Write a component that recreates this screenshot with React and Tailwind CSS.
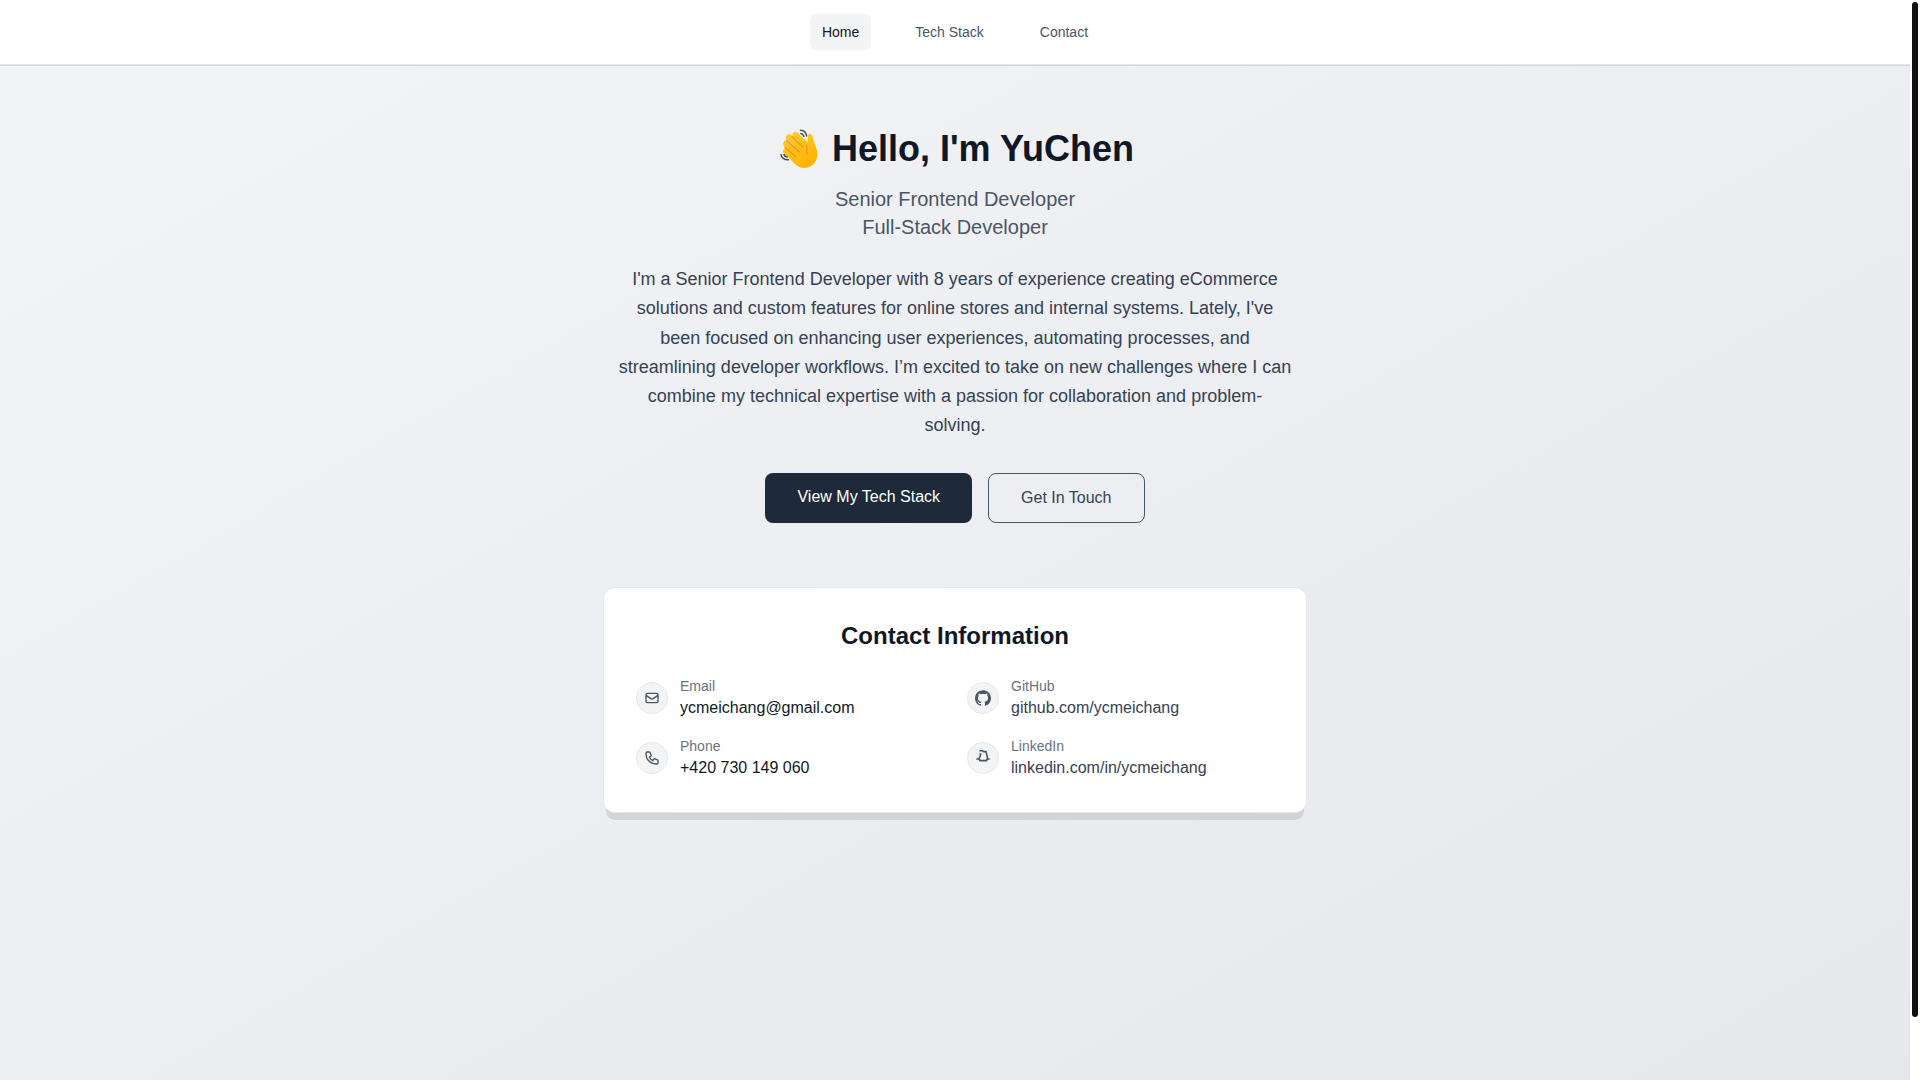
import React from "react";

const navLinks = [
  { label: "Home", active: true },
  { label: "Tech Stack", active: false },
  { label: "Contact", active: false },
];

function WavingHand() {
  return (
    <svg className="h-10 w-11 shrink-0" viewBox="0 0 44 40" fill="none" strokeLinecap="round" strokeLinejoin="round" role="img" aria-label="Waving hand">
      <defs>
        <linearGradient id="skin" x1="12" y1="4" x2="30" y2="39" gradientUnits="userSpaceOnUse">
          <stop offset="0" stopColor="#ffca28" />
          <stop offset="1" stopColor="#ffb300" />
        </linearGradient>
      </defs>
      <g stroke="url(#skin)" strokeWidth="6">
        <path d="M19.5 5.8 31 17" />
        <path d="M13 8.2 27 21" />
        <path d="M10.2 14.8 24 27" />
        <path d="M10 22.2 21 32" />
      </g>
      <path
        fill="url(#skin)"
        d="M20 14 29.500 17.500C32 15.500 32 12 31.700 8.500 31.400 3.800 35.800 3.600 36.600 7.600 37.600 13.500 41.400 18.500 41.300 26 41 34 35 39 28 39 22.500 39 18.500 35 13 28.500Z"
      />
      <g stroke="#f19534" strokeWidth="1.300">
        <path d="M15.500 7.200 27 18" />
        <path d="M10.500 11.200 23.500 23" />
        <path d="M9 18.300 19.500 27.500" />
        <path d="M30.500 16.500C31.500 19.500 30.500 22 31 25" />
      </g>
      <g stroke="#484b50" strokeWidth="1.500">
        <path d="M24.500 1.200C27.500 1.200 30 3.500 30.600 6.800" />
        <path d="M24.800 4.400C26.200 4.600 27.400 5.800 27.800 7.200" />
        <path d="M5 25.500C5 28.500 8.500 31 12.500 30.700" />
        <path d="M8 25.500C8.300 26.800 9.600 27.800 11.200 28" />
      </g>
    </svg>
  );
}

function MailIcon() {
  return (
    <svg className="size-4" fill="none" stroke="currentColor" strokeWidth="2" strokeLinecap="round" strokeLinejoin="round" viewBox="0 0 24 24" aria-hidden="true">
      <path d="M3 8l7.89 5.26a2 2 0 002.22 0L21 8M5 19h14a2 2 0 002-2V7a2 2 0 00-2-2H5a2 2 0 00-2 2v10a2 2 0 002 2z" />
    </svg>
  );
}

function PhoneIcon() {
  return (
    <svg className="size-4" fill="none" stroke="currentColor" strokeWidth="2" strokeLinecap="round" strokeLinejoin="round" viewBox="0 0 24 24" aria-hidden="true">
      <path d="M3 5a2 2 0 012-2h3.28a1 1 0 01.948.684l1.498 4.493a1 1 0 01-.502 1.21l-2.257 1.13a11.042 11.042 0 005.516 5.516l1.13-2.257a1 1 0 011.21-.502l4.493 1.498a1 1 0 01.684.949V19a2 2 0 01-2 2h-1C9.716 21 3 14.284 3 6V5z" />
    </svg>
  );
}

function GitHubIcon() {
  return (
    <svg className="size-4" fill="currentColor" viewBox="0 0 24 24" aria-hidden="true">
      <path d="M12 .297c-6.63 0-12 5.373-12 12 0 5.303 3.438 9.8 8.205 11.385.6.113.82-.258.82-.577 0-.285-.01-1.04-.015-2.04-3.338.724-4.042-1.61-4.042-1.61C4.422 18.07 3.633 17.7 3.633 17.7c-1.087-.744.084-.729.084-.729 1.205.084 1.838 1.236 1.838 1.236 1.07 1.835 2.809 1.305 3.495.998.108-.776.417-1.305.76-1.605-2.665-.3-5.466-1.332-5.466-5.93 0-1.31.465-2.38 1.235-3.22-.135-.303-.54-1.523.105-3.176 0 0 1.005-.322 3.3 1.23.96-.267 1.98-.399 3-.405 1.02.006 2.04.138 3 .405 2.28-1.552 3.285-1.23 3.285-1.23.645 1.653.24 2.873.12 3.176.765.84 1.23 1.91 1.23 3.22 0 4.61-2.805 5.625-5.475 5.92.42.36.81 1.096.81 2.22 0 1.606-.015 2.896-.015 3.286 0 .315.21.69.825.57C20.565 22.092 24 17.592 24 12.297c0-6.627-5.373-12-12-12" />
    </svg>
  );
}

function LinkedInIcon() {
  return (
    <svg className="size-4" fill="none" stroke="currentColor" strokeWidth="1.6" viewBox="0 0 16 16" aria-hidden="true">
      <path d="M4.500.8H7.500L8.500 1.600H11L12 5.500 12.500 8.500M6.500 4H5.300V6L4 8.500M1.300 9H4L5 10.600H11.500L12.300 9H14.700M4.500 9.500 5.500 10.600M12 9.500 11 10.600" />
    </svg>
  );
}

const contacts = [
  { label: "Email", value: "ycmeichang@gmail.com", Icon: MailIcon },
  { label: "GitHub", value: "github.com/ycmeichang", href: "https://github.com/ycmeichang", Icon: GitHubIcon },
  { label: "Phone", value: "+420 730 149 060", Icon: PhoneIcon },
  { label: "LinkedIn", value: "linkedin.com/in/ycmeichang", href: "https://linkedin.com/in/ycmeichang", Icon: LinkedInIcon },
];

export default function App() {
  return (
    <div className="flex h-screen overflow-hidden bg-white font-['Liberation_Sans',Arial,sans-serif] text-gray-900">
      <div className="min-w-0 flex-1">
        <header className="relative border-b border-gray-200 bg-white shadow-[0_1px_0_#d1d5dc]">
          <nav className="flex h-16 items-center justify-center gap-8">
            {navLinks.map(({ label, active }) => (
              <a
                key={label}
                href="#"
                aria-current={active ? "page" : undefined}
                className={
                  active
                    ? "rounded-md bg-gray-100 px-3 py-2 text-sm text-gray-900"
                    : "rounded-md px-3 py-2 text-sm text-gray-600"
                }
              >
                {label}
              </a>
            ))}
          </nav>
        </header>

        <main className="min-h-screen bg-linear-to-br from-gray-100 to-gray-200 px-8 py-16">
          <section className="mx-auto max-w-[674px] text-center">
            <h1 className="mb-4 flex items-center justify-center gap-3 text-4xl font-bold">
              <WavingHand />
              Hello, I'm YuChen
            </h1>
            <p className="mb-6 text-xl text-gray-600">
              Senior Frontend Developer
              <br />
              Full-Stack Developer
            </p>
            <p className="mb-8 text-lg leading-relaxed text-gray-700">
              I'm a Senior Frontend Developer with 8 years of experience creating eCommerce solutions and custom
              features for online stores and internal systems. Lately, I've been focused on enhancing user
              experiences, automating processes, and streamlining developer workflows. I’m excited to take on new
              challenges where I can combine my technical expertise with a passion for collaboration and
              problem-solving.
            </p>
            <div className="flex justify-center gap-4">
              <a href="#" className="rounded-lg bg-gray-800 px-8 py-3 text-white">View My Tech Stack</a>
              <a href="#" className="rounded-lg border border-gray-600 px-8 py-3 text-gray-700">Get In Touch</a>
            </div>
          </section>

          <section className="mx-auto mt-16 max-w-[704px] rounded-xl border border-gray-200 bg-white p-8 shadow-[0_10px_0_-3px_rgba(0,0,0,0.1)]">
            <h2 className="mb-6 text-center text-2xl font-bold">Contact Information</h2>
            <div className="grid grid-cols-2 gap-x-6 gap-y-4">
              {contacts.map(({ label, value, href, Icon }) => (
                <div key={label} className="flex items-center gap-3">
                  <span className="flex size-8 items-center justify-center rounded-full border border-gray-200 bg-gray-100 text-gray-600">
                    <Icon />
                  </span>
                  <div>
                    <p className="text-sm text-gray-500">{label}</p>
                    {href ? (
                      <a href={href} className="block text-gray-700">{value}</a>
                    ) : (
                      <p>{value}</p>
                    )}
                  </div>
                </div>
              ))}
            </div>
          </section>
        </main>
      </div>
      <div className="w-2.5 shrink-0 bg-white p-0.5" aria-hidden="true">
        <div className="h-[94.3%] w-1.5 rounded-full bg-[#111111]" />
      </div>
    </div>
  );
}
